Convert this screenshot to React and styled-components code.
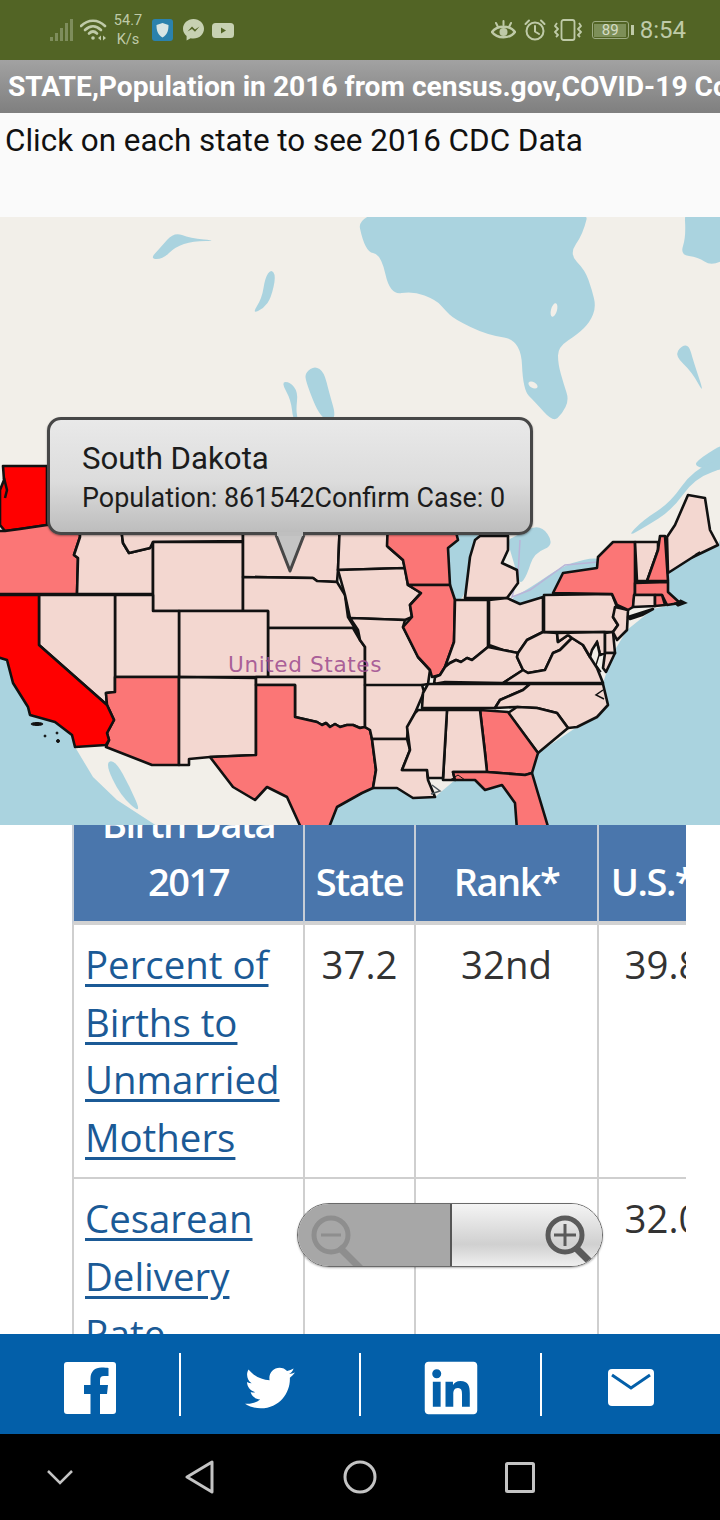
import React from "react";
import styled, { createGlobalStyle } from "styled-components";
import { FaTwitter, FaLinkedin } from "react-icons/fa";

const Global = createGlobalStyle`
  html, body { margin: 0; padding: 0; background: #fff; }
  #root { width: 720px; }
`;

const Page = styled.div`
  width: 720px;
  height: 1520px;
  display: flex;
  flex-direction: column;
  overflow: hidden;
  font-family: Roboto, "Liberation Sans", sans-serif;
`;

const StatusBar = styled.header`
  height: 60px;
  flex: none;
  background: #526425;
  color: #bfcaa8;
  display: flex;
  align-items: center;
  justify-content: space-between;
  padding: 0 34px 0 50px;
  box-sizing: border-box;
`;
const StatusGroup = styled.div`
  display: flex;
  align-items: center;
  gap: ${(p) => p.$gap}px;
`;
const NetRate = styled.div`
  width: 30px;
  margin: 0 9px 0 6px;
  font-size: 14.5px;
  line-height: 19px;
  text-align: center;
  color: #bfcaa8;
`;
const Clock = styled.span`
  font-size: 24px;
  color: #bfcaa8;
  margin-left: -2px;
`;
const BatteryBox = styled.div`
  position: relative;
  width: 37px;
  height: 18px;
  margin-left: 2px;
  box-sizing: border-box;
  border: 1.5px solid #9dab82;
  border-radius: 3px;
  padding: 1.5px;
  margin-right: 5px;
  &::after {
    content: "";
    position: absolute;
    right: -6px;
    top: 3px;
    width: 2.5px;
    height: 10px;
    background: #bfcaa8;
  }
`;
const BatteryFill = styled.div`
  height: 100%;
  background: #7d8f58;
  color: #d5dcc4;
  font-size: 15px;
  line-height: 12px;
  text-align: center;
`;

const TitleBar = styled.div`
  height: 53px;
  flex: none;
  background: linear-gradient(#a2a2a2, #7f7f7f);
  color: #fff;
  font-size: 28.2px;
  font-weight: 700;
  line-height: 54px;
  padding: 0 4px 0 8px;
  white-space: nowrap;
  overflow: hidden;
`;
const Instruction = styled.div`
  height: 104px;
  flex: none;
  background: #fafafa;
  color: #111;
  font-size: 31.4px;
  line-height: 36px;
  padding: 10px 0 0 5px;
  box-sizing: border-box;
`;

const MapArea = styled.section`
  position: relative;
  height: 608px;
  flex: none;
  overflow: hidden;
  background: #f2efe9;
`;
const MapSvg = styled.svg`
  display: block;
  width: 720px;
  height: 608px;
`;
const Callout = styled.div`
  position: absolute;
  left: 47px;
  top: 200px;
  width: 486px;
  height: 118px;
  box-sizing: border-box;
  border: 3px solid #474747;
  border-radius: 14px;
  background: linear-gradient(#e9e9e9, #dcdcdc 55%, #bdbdbd);
  padding: 22px 0 0 32px;
  color: #1c1c1c;
  box-shadow: 0 1px 2px rgba(0, 0, 0, .35);
`;
const CalloutTitle = styled.div`
  font-size: 31.2px;
  line-height: 34px;
`;
const CalloutBody = styled.div`
  font-size: 26.9px;
  line-height: 30px;
  margin-top: 7px;
  white-space: nowrap;
`;
const CalloutTail = styled.svg`
  position: absolute;
  left: 224px;
  top: 112px;
  width: 32px;
  height: 43px;
`;

const TableArea = styled.section`
  position: relative;
  height: 509px;
  flex: none;
  overflow: hidden;
  background: #fff;
  padding-left: 72px;
`;
const TableClip = styled.div`
  width: 614px;
  margin-top: -40px;
  overflow: hidden;
`;
const DataTable = styled.table`
  width: 654px;
  table-layout: fixed;
  border-collapse: separate;
  border-spacing: 0;
  font-family: "Open Sans", "Noto Sans", sans-serif;
  font-size: 38.4px;
  line-height: 57.5px;
`;
const Head = styled.th`
  background: #4a76ac;
  color: #fff;
  font-size: 38px;
  font-weight: 600;
  letter-spacing: -1.5px;
  vertical-align: bottom;
  text-align: center;
  padding: 0 ${(p) => p.$inset || 0}px 11px 0;
  height: 140px;
  box-sizing: border-box;
  border-left: 2px solid #c6cdd6;
  border-bottom: 4px solid #d2d2d2;
`;
const Cell = styled.td`
  vertical-align: top;
  text-align: ${(p) => (p.$label ? "left" : "center")};
  color: #333;
  padding: ${(p) => (p.$label ? "11px 0 11px 11px" : "11px 0 11px")};
  border-left: 2px solid #cfcfcf;
  border-bottom: 2px solid #cfcfcf;
`;
const StatLink = styled.a`
  color: #1b5a96;
  text-decoration: underline;
  text-decoration-thickness: 3px;
  text-underline-offset: 5px;
`;

const ZoomControl = styled.div`
  position: absolute;
  left: 297px;
  top: 378px;
  width: 306px;
  height: 64px;
  box-sizing: border-box;
  display: flex;
  border: 1.5px solid #6a6a6a;
  border-radius: 32px;
  overflow: hidden;
  box-shadow: 0 1px 2px rgba(0, 0, 0, .3);
`;
const ZoomPart = styled.div`
  position: relative;
  flex: ${(p) => (p.$out ? "0 0 152px" : "1")};
  background: ${(p) => (p.$out ? "#a7a7a7" : "linear-gradient(#f4f4f4, #d0d0d0 65%, #efefef)")};
  border-right: ${(p) => (p.$out ? "2px solid #555" : "0")};
`;
const ZoomGlyph = styled.svg`
  position: absolute;
  top: 11px;
  ${(p) => (p.$out ? "left: 13px;" : "right: 3px;")}
  width: 54px;
  height: 54px;
`;

const ShareBar = styled.nav`
  height: 100px;
  flex: none;
  background: #035fa9;
  display: grid;
  grid-template-columns: 181px 180px 181px 178px;
  align-items: center;
`;
const ShareItem = styled.div`
  height: 63px;
  display: flex;
  align-items: center;
  justify-content: center;
  color: #fff;
  border-right: ${(p) => (p.$last ? "0" : "2px solid #fff")};
  padding-top: 7px;
  box-sizing: border-box;
`;

const NavBar = styled.nav`
  height: 86px;
  flex: none;
  background: #000;
  display: grid;
  grid-template-columns: 120px 160px 160px 160px;
  align-items: center;
  justify-items: center;
`;

const LIGHT = "#f3d7d0", MID = "#fb7676", RED = "#ff0000";

const states = [
  [RED, "3,466 47,466 47,525 20,529 5,531 0,525 0,490 4,480"],
  [MID, "-3,531 5,531 20,529 47,525 80,520 80,537 74,555 78,558 77,594 -3,594"],
  [LIGHT, "80,520 120,520 123,543 129,553 150,548 153,542 153,594 77,594 78,558 74,555 80,537"],
  [LIGHT, "120,520 243,520 243,541 153,542 150,548 129,553 123,543"],
  [LIGHT, "153,542 243,542 243,611 153,611"],
  [LIGHT, "243,520 340,520 338,570 337,582 317,581 313,578 243,577"],
  [LIGHT, "243,577 313,578 317,581 337,582 345,595 348,617 358,633 353,628 268,628 268,611 243,611"],
  [LIGHT, "268,628 353,628 360,640 365,647 365,677 268,677"],
  [LIGHT, "179,611 268,611 268,677 179,677"],
  [LIGHT, "115,595 153,595 153,611 179,611 179,677 115,677"],
  [LIGHT, "39,595 115,595 115,692 106,693 107,705 39,645"],
  [MID, "115,677 179,677 179,765 152,765 106,747 109,740 107,733 114,720 107,705 106,693 115,692"],
  [LIGHT, "179,677 256,678 256,755 210,757 189,759 189,765 179,765"],
  [RED, "-3,595 39,595 39,645 107,705 114,720 107,733 109,740 106,745 75,747 72,735 55,722 30,715 28,707 13,683 7,660 -3,657"],
  [LIGHT, "256,677 365,677 365,685 365,727 360,728 353,725 347,725 340,727 335,724 330,727 326,723 322,725 317,722 295,717 295,685 256,685"],
  [MID, "256,685 295,685 295,717 317,722 322,725 326,723 330,727 335,724 340,727 347,725 353,725 360,728 365,727 370,730 372,739 376,770 373,788 362,793 337,807 328,830 302,830 287,797 267,787 255,800 233,787 210,757 256,755"],
  [LIGHT, "340,520 388,520 388,547 403,560 405,568 338,570"],
  [LIGHT, "338,570 405,568 408,585 421,593 410,605 412,617 405,620 350,618 345,595"],
  [LIGHT, "350,618 405,620 403,627 418,657 430,670 428,684 422,685 422,692 365,685 365,647 360,640 358,630"],
  [LIGHT, "365,685 422,685 424,692 415,713 408,727 407,739 372,739 370,730 365,727"],
  [LIGHT, "372,739 407,739 410,750 402,770 427,770 428,780 435,797 413,798 397,788 373,788 376,770"],
  [MID, "388,520 453,520 458,540 448,548 450,585 408,585 403,560 387,546"],
  [MID, "408,585 450,585 455,600 454,642 445,667 440,675 432,677 430,670 418,657 403,627 412,617 410,605 421,593"],
  [LIGHT, "480,536 508,536 508,550 502,563 517,570 518,583 507,598 465,598 470,557 475,540"],
  [LIGHT, "455,600 488,600 488,647 477,656 472,660 467,658 461,662 456,660 450,663 445,667 454,642"],
  [LIGHT, "489,600 507,598 520,604 543,597 543,632 527,640 518,653 503,650 489,645"],
  [LIGHT, "488,647 503,650 518,653 517,657 523,670 503,683 445,682 434,684 435,677 440,675 445,667 450,663 456,660 461,662 467,658 472,660 477,656"],
  [LIGHT, "543,632 557,633 558,642 568,635 572,638 560,650 553,653 545,670 528,673 523,670 517,657 518,653 527,640"],
  [LIGHT, "572,638 583,645 590,657 597,668 603,683 503,683 523,670 528,673 545,670 553,653 560,650"],
  [LIGHT, "544,595 612,594 617,607 613,617 618,625 613,632 544,632"],
  [LIGHT, "557,633 605,632 605,653 600,655 597,642 592,650 590,657 583,645 572,638 568,635 558,642"],
  [LIGHT, "605,633 613,632 615,653 605,653"],
  [LIGHT, "605,653 615,653 606,672 603,668"],
  [LIGHT, "615,607 628,610 627,630 617,640 613,632 618,625 613,617"],
  [MID, "553,593 563,573 597,568 598,557 613,542 635,542 635,592 633,607 628,610 617,605 612,594"],
  [MID, "628,617 653,609 642,615 630,619"],
  [LIGHT, "428,684 530,684 523,690 500,700 495,708 422,708 423,693"],
  [LIGHT, "530,684 603,684 608,705 597,717 577,727 568,728 557,713 537,708 517,707 495,708 500,700 523,690"],
  [LIGHT, "508,713 517,707 537,708 557,713 568,728 538,753"],
  [MID, "480,710 508,712 538,753 532,773 525,775 487,772 485,753"],
  [LIGHT, "447,710 480,710 485,753 487,772 453,772 455,780 443,780"],
  [LIGHT, "418,710 447,710 443,778 428,778 427,770 402,770 410,750 407,727 415,713"],
  [MID, "453,772 487,772 525,775 532,773 537,790 549,830 517,830 515,803 502,785 485,790 475,780 455,780"],
  [LIGHT, "635,542 658,542 658,550 647,581 637,581"],
  [MID, "660,536 665,536 668,581 647,581 658,550"],
  [LIGHT, "667,537 675,525 688,495 705,498 710,530 718,545 693,557 668,573"],
  [MID, "635,583 668,582 668,592 680,603 667,605 662,595 635,595"],
  [LIGHT, "634,595 655,595 655,606 633,607"],
  [MID, "655,595 662,595 665,605 655,606"],
];

const lakes = [
  "355,205 590,205 583,234 569,254 585,270 592,290 596,307 590,322 578,334 558,347 558,364 564,385 569,400 562,414 553,422 535,402 523,390 521,340 487,335 454,319 445,310 436,300 413,291 390,295 381,254 365,252",
  "684,205 730,205 730,257 711,266 698,257 680,255 686,237",
  "150,259 160,248 174,232 190,238 218,241 193,241 175,247 163,259",
  "252,314 262,298 265,278 271,269 276,276 271,298 264,308",
  "305,380 306,372 315,366 324,372 329,392 337,420 321,420",
  "281,382 290,382 298,392 296,410 298,420 293,420 291,400",
  "675,356 681,346 689,345 693,360 705,396 692,372",
  "730,440 700,458 693,467 730,472",
  "730,455 693,470 670,503 643,520 627,537 645,527 672,510 695,478 730,466",
  "458,528 482,528 470,557 465,600 450,600 446,575 446,548",
  "514,537 540,523 555,545 534,553 527,575 520,585 516,570 507,540",
  "508,600 520,606 543,599 553,595 565,575 600,570 602,556 565,564 530,588",
];
const seas = [
  "720,540 718,545 693,557 668,573 668,592 680,603 653,609 627,630 613,653 603,683 608,705 577,727 538,753 532,773 537,790 549,830 720,830",
  "517,830 515,803 502,785 485,790 475,780 455,780 435,797 413,798 397,788 373,788 362,793 337,807 328,830",
  "-3,657 7,660 13,683 28,707 30,715 55,722 72,735 75,747 93,777 117,800 157,826 -3,830",
];

function smooth(points) {
  const p = points.split(" ").map((s) => s.split(",").map(Number));
  const mid = (a, b) => [(a[0] + b[0]) / 2, (a[1] + b[1]) / 2];
  const start = mid(p[p.length - 1], p[0]);
  let d = `M${start[0]} ${start[1]}`;
  p.forEach((pt, i) => {
    const m = mid(pt, p[(i + 1) % p.length]);
    d += ` Q${pt[0]} ${pt[1]} ${m[0]} ${m[1]}`;
  });
  return d + " Z";
}

function UsMap() {
  return (
    <MapSvg viewBox="0 217 720 608">
      <g fill="#aad3df">
        {lakes.map((p, i) => <path key={i} d={smooth(p)} />)}
        {seas.map((p, i) => <polygon key={i} points={p} />)}
        <path d={smooth("105,763 115,760 130,787 142,815 120,795")} />
      </g>
      <g fill="#f2efe9">
        <ellipse cx="533" cy="385" rx="5" ry="3" transform="rotate(30 533 385)" />
        <ellipse cx="554" cy="310" rx="3" ry="7" transform="rotate(15 554 310)" />
      </g>
      <polyline points="520,540 518,575 512,597 530,590 565,565 598,562" fill="none" stroke="#b9b4d8" strokeWidth="1.5" />
      <g stroke="#111" strokeWidth="2.6" strokeLinejoin="round">
        {states.map(([fill, p], i) => <polygon key={i} points={p} fill={fill} />)}
      </g>
      <g fill="#111" stroke="#111">
        <polyline points="4,478 7,490 5,498" fill="none" strokeWidth="2.5" />
        <polyline points="680,600 686,603 678,606 674,603" strokeWidth="1.5" />
        <polyline points="695,555 700,552 692,558" strokeWidth="2" />
        <polyline points="450,780 458,775 465,780" fill="none" strokeWidth="1" />
        <ellipse cx="37" cy="724" rx="6" ry="1.5" />
        <circle cx="45" cy="736" r="1" />
        <circle cx="57" cy="733" r="1" />
        <circle cx="58" cy="741" r="1.5" />
        <polyline points="432,785 440,791 431,794" fill="none" stroke="#4f5a60" strokeWidth="1.5" />
        <polyline points="597,640 600,652 596,665 601,672" fill="none" strokeWidth="1.5" />
        <polyline points="603,690 596,695 604,699" fill="none" strokeWidth="1.5" />
      </g>
      <text
        x="228"
        y="672"
        fontFamily="'DejaVu Sans', sans-serif"
        fontSize="21.6"
        letterSpacing="0.6"
        fill="#a04f90"
        fillOpacity="0.9"
      >
        United States
      </text>
    </MapSvg>
  );
}

function Signal() {
  return (
    <svg width="24" height="24" viewBox="0 0 24 24" fill="#7e8d5c">
      <rect x="0" y="19" width="3" height="4" />
      <rect x="5" y="15" width="3" height="8" />
      <rect x="10" y="10" width="3" height="13" />
      <rect x="15" y="5" width="3" height="18" />
      <rect x="20" y="1" width="3" height="22" />
    </svg>
  );
}
function Wifi() {
  return (
    <svg width="27" height="22" viewBox="0 0 27 22" fill="none" stroke="#bfcaa8" strokeWidth="2.6" strokeLinecap="round" style={{ marginLeft: 6 }}>
      <path d="M1 7 C8 0 18 0 25 7" />
      <path d="M5 11 C10 6 16 6 21 11" />
      <path d="M9 14.5 C11.5 12 14.5 12 17 14.5" />
      <circle cx="13" cy="19" r="1.8" fill="#bfcaa8" stroke="none" />
      <path d="M18 19 l3 -2.5 v5 z M26 19 l-3 -2.5 v5 z" fill="#bfcaa8" stroke="none" />
    </svg>
  );
}
function Shield() {
  return (
    <svg width="21" height="22" viewBox="0 0 21 22">
      <rect width="21" height="22" rx="3" fill="#2b82ad" />
      <path d="M10.5 4 L16.5 6 C16.5 12 15 16 10.5 18.5 C6 16 4.5 12 4.5 6 Z" fill="#d8e6e4" />
    </svg>
  );
}
function Messenger() {
  return (
    <svg width="21" height="22" viewBox="0 0 21 22" style={{ marginLeft: 10 }}>
      <path d="M10.5 0 C4.7 0 0 4.3 0 9.8 C0 12.8 1.4 15.3 3.6 17 V21.5 L7.6 19.2 C8.5 19.5 9.5 19.6 10.5 19.6 C16.3 19.6 21 15.3 21 9.8 C21 4.3 16.3 0 10.5 0 Z" fill="#c7d1b2" />
      <path d="M4.5 12.5 L9 7.5 L12 10.5 L16.5 7.5 L12 12.8 L9 10 Z" fill="#526425" />
    </svg>
  );
}
function Video() {
  return (
    <svg width="22" height="15" viewBox="0 0 22 15" style={{ marginLeft: 8 }}>
      <rect width="22" height="15" rx="3.5" fill="#c7d1b2" />
      <path d="M9 4.5 L14 7.5 L9 10.5 Z" fill="#526425" />
    </svg>
  );
}
function Eye() {
  return (
    <svg width="25" height="20" viewBox="0 0 25 20" fill="none" stroke="#bfcaa8" strokeWidth="2.4">
      <path d="M1 12 C6 5 19 5 24 12 C19 19 6 19 1 12 Z" />
      <circle cx="12.5" cy="12" r="4" fill="#bfcaa8" stroke="none" />
      <path d="M5 3 L7 7 M12.5 1 V5 M20 3 L18 7" strokeLinecap="round" strokeWidth="2" />
    </svg>
  );
}
function Alarm() {
  return (
    <svg width="22" height="22" viewBox="0 0 22 22" fill="none" stroke="#bfcaa8" strokeWidth="2" strokeLinecap="round">
      <circle cx="11" cy="12" r="8.5" />
      <path d="M11 7 V12.5 L15 15 M1.5 5 L5 1.5 M20.5 5 L17 1.5" />
    </svg>
  );
}
function Vibrate() {
  return (
    <svg width="28" height="22" viewBox="0 0 28 22" fill="none" stroke="#bfcaa8" strokeWidth="1.8" strokeLinejoin="round">
      <rect x="7.5" y="1" width="13" height="20" rx="2" />
      <path d="M3 4 L1 7 L4 10 L1 13 L4 16 L2 18 M25 4 L27 7 L24 10 L27 13 L24 16 L26 18" />
    </svg>
  );
}
function Facebook() {
  return (
    <svg width="52" height="52" viewBox="0 0 52 52">
      <rect width="52" height="52" rx="3" fill="#fff" />
      <path d="M36 52 V32 H43 L44 23 H36 V18 C36 15.5 37 14 40 14 H44.5 V6 C43 5.8 40.5 5.6 37.5 5.6 C31 5.6 26.5 9.5 26.5 16.7 V23 H20 V32 H26.5 V52 Z" fill="#035fa9" />
    </svg>
  );
}
function Mail() {
  return (
    <svg width="46" height="37" viewBox="0 0 46 37">
      <rect width="46" height="37" rx="4" fill="#fff" />
      <path d="M4 6 L23 19 L42 6" fill="none" stroke="#035fa9" strokeWidth="3" />
    </svg>
  );
}

const rows = [
  { label: "Percent of Births to Unmarried Mothers", state: "37.2", rank: "32nd", us: "39.8" },
  { label: "Cesarean Delivery Rate", state: "", rank: "", us: "32.0" },
];

export default function App() {
  return (
    <Page>
      <Global />
      <StatusBar>
        <StatusGroup $gap={0}>
          <Signal />
          <Wifi />
          <NetRate>54.7<br />K/s</NetRate>
          <Shield />
          <Messenger />
          <Video />
        </StatusGroup>
        <StatusGroup $gap={8}>
          <Eye />
          <Alarm />
          <Vibrate />
          <BatteryBox><BatteryFill>89</BatteryFill></BatteryBox>
          <Clock>8:54</Clock>
        </StatusGroup>
      </StatusBar>

      <TitleBar>STATE,Population in 2016 from census.gov,COVID-19 Confirm Case</TitleBar>
      <Instruction>Click on each state to see 2016 CDC Data</Instruction>

      <MapArea>
        <UsMap />
        <Callout>
          <CalloutTitle>South Dakota</CalloutTitle>
          <CalloutBody>Population: 861542Confirm Case: 0</CalloutBody>
          <CalloutTail viewBox="0 0 32 43">
            <path d="M2 3 L16 39 L30 3" fill="#c4c4c4" stroke="#474747" strokeWidth="3" strokeLinejoin="round" />
            <rect x="3" y="0" width="26" height="4" fill="#bfbfbf" />
          </CalloutTail>
        </Callout>
      </MapArea>

      <TableArea>
        <TableClip>
          <DataTable>
            <colgroup>
              <col style={{ width: 231 }} />
              <col style={{ width: 111 }} />
              <col style={{ width: 183 }} />
              <col style={{ width: 129 }} />
            </colgroup>
            <thead>
              <tr>
                <Head>Birth Data 2017</Head>
                <Head>State</Head>
                <Head>Rank*</Head>
                <Head $inset={20}>U.S.*</Head>
              </tr>
            </thead>
            <tbody>
              {rows.map((r) => (
                <tr key={r.label}>
                  <Cell $label><StatLink href="#">{r.label}</StatLink></Cell>
                  <Cell>{r.state}</Cell>
                  <Cell>{r.rank}</Cell>
                  <Cell>{r.us}</Cell>
                </tr>
              ))}
            </tbody>
          </DataTable>
        </TableClip>
        <ZoomControl>
          <ZoomPart $out>
            <ZoomGlyph $out viewBox="0 0 54 54" fill="none" stroke="#8e8e8e">
              <path d="M28 32 L52 56" strokeWidth="7" />
              <circle cx="20" cy="20" r="17" strokeWidth="5" />
              <path d="M10 20 H30" strokeWidth="3" />
            </ZoomGlyph>
          </ZoomPart>
          <ZoomPart>
            <ZoomGlyph viewBox="0 0 54 54" fill="none" stroke="#5a5a5a">
              <path d="M30 32 L50 52" strokeWidth="7" />
              <circle cx="20" cy="20" r="17" strokeWidth="5" />
              <path d="M9 20 H31 M20 9 V31" strokeWidth="3" />
            </ZoomGlyph>
          </ZoomPart>
        </ZoomControl>
      </TableArea>

      <ShareBar>
        <ShareItem><Facebook /></ShareItem>
        <ShareItem><FaTwitter size={50} /></ShareItem>
        <ShareItem><FaLinkedin size={60} /></ShareItem>
        <ShareItem $last><Mail /></ShareItem>
      </ShareBar>

      <NavBar>
        <svg width="28" height="16" viewBox="0 0 28 16" fill="none" stroke="#c4c4c4" strokeWidth="2.5"><path d="M2 2 L14 14 L26 2" /></svg>
        <svg width="30" height="34" viewBox="0 0 30 34" fill="none" stroke="#c4c4c4" strokeWidth="3" strokeLinejoin="round"><path d="M27 2 V32 L2 17 Z" /></svg>
        <svg width="34" height="34" viewBox="0 0 34 34" fill="none" stroke="#c4c4c4" strokeWidth="3"><circle cx="17" cy="17" r="15" /></svg>
        <svg width="30" height="31" viewBox="0 0 30 31" fill="none" stroke="#c4c4c4" strokeWidth="3"><rect x="1.5" y="1.5" width="27" height="28" rx="1" /></svg>
      </NavBar>
    </Page>
  );
}
